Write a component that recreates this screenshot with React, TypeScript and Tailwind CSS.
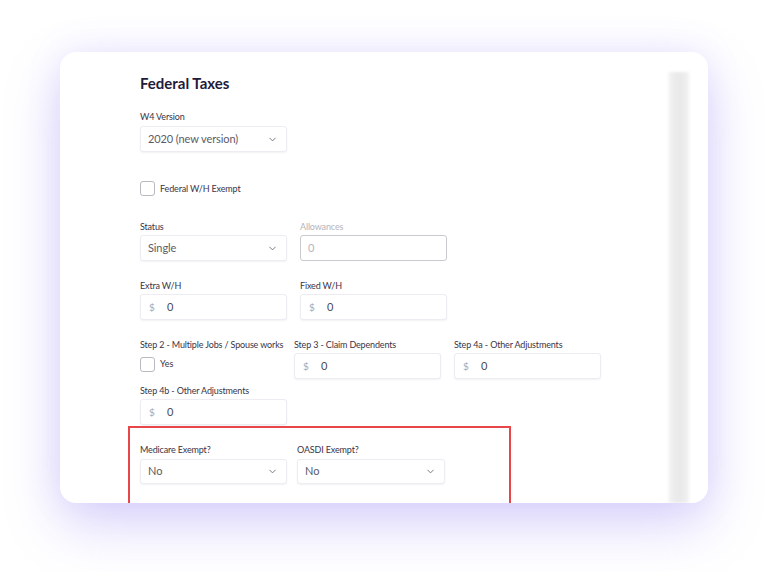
import { ChevronDown } from "lucide-react";

const font = { fontFamily: "Lato, 'Open Sans', sans-serif" };

function Label({ children, muted = false }: { children: React.ReactNode; muted?: boolean }) {
  return (
    <div
      className={`h-[12px] text-[9px] leading-[12px] tracking-[-0.15px] whitespace-nowrap ${muted ? "text-[#b4b4bc]" : "text-[#3a3447]"}`}
    >
      {children}
    </div>
  );
}

function Select({ value, width = "w-[147px]", height = "h-[26px]" }: { value: string; width?: string; height?: string }) {
  return (
    <div
      className={`${width} ${height} flex items-center justify-between rounded-[3px] border border-[#ececf2] bg-white pl-[7px] pr-[8px] shadow-[0_1px_2px_rgba(40,30,90,0.06)]`}
    >
      <span className="text-[11px] tracking-[-0.1px] text-[#5b5b66]">{value}</span>
      <ChevronDown className="h-[11px] w-[11px] text-[#6e6e78]" strokeWidth={2} />
    </div>
  );
}

function MoneyInput({ width = "w-[147px]" }: { width?: string }) {
  return (
    <div
      className={`${width} h-[26px] flex items-center rounded-[3px] border border-[#ececf2] bg-white pl-[8px] shadow-[0_1px_2px_rgba(40,30,90,0.06)]`}
    >
      <span className="w-[18px] text-[10px] text-[#a8a8b0]">$</span>
      <span className="text-[11px] text-[#4a4a55]">0</span>
    </div>
  );
}

function Checkbox() {
  return <div className="h-[15px] w-[15px] rounded-[3px] border border-[#b9b9c2] bg-white" />;
}

export default function App() {
  return (
    <div
      className="relative h-[572px] w-[768px] overflow-hidden bg-white pl-[60px] pt-[52px]"
      style={font}
    >
      <div className="flex h-[451px] w-[648px] overflow-hidden rounded-[16px] bg-white shadow-[0_22px_55px_rgba(125,105,240,0.28),0_0_34px_rgba(150,130,245,0.14)]">
        <div className="flex-1 pl-[80px] pt-[22px]">
          <h1 className="h-[18px] text-[15px] font-bold leading-[18px] text-[#1f1b3b]">Federal Taxes</h1>

          <div className="mt-[19px]">
            <Label>W4 Version</Label>
            <div className="mt-[3px]">
              <Select value="2020 (new version)" />
            </div>
          </div>

          <div className="mt-[29px] flex items-center gap-[5px]">
            <Checkbox />
            <span className="text-[9px] tracking-[-0.15px] text-[#3a3447]">Federal W/H Exempt</span>
          </div>

          <div className="mt-[25px] flex gap-[13px]">
            <div>
              <Label>Status</Label>
              <div className="mt-[2px]">
                <Select value="Single" />
              </div>
            </div>
            <div>
              <Label muted>Allowances</Label>
              <div className="mt-[2px] flex h-[26px] w-[147px] items-center rounded-[3px] border border-[#c9c9cf] bg-white pl-[7px]">
                <span className="text-[11px] text-[#b4b4bc]">0</span>
              </div>
            </div>
          </div>

          <div className="mt-[19px] flex gap-[13px]">
            <div>
              <Label>Extra W/H</Label>
              <div className="mt-[2px]">
                <MoneyInput />
              </div>
            </div>
            <div>
              <Label>Fixed W/H</Label>
              <div className="mt-[2px]">
                <MoneyInput />
              </div>
            </div>
          </div>

          <div className="mt-[19px] flex">
            <div className="w-[154px]">
              <Label>Step 2 - Multiple Jobs / Spouse works</Label>
              <div className="mt-[6px] flex items-center gap-[5px]">
                <Checkbox />
                <span className="-mt-[2px] text-[9px] text-[#3a3447]">Yes</span>
              </div>
            </div>
            <div className="w-[160px]">
              <Label>Step 3 - Claim Dependents</Label>
              <div className="mt-[2px]">
                <MoneyInput />
              </div>
            </div>
            <div>
              <Label>Step 4a - Other Adjustments</Label>
              <div className="mt-[2px]">
                <MoneyInput />
              </div>
            </div>
          </div>

          <div className="mt-[6px]">
            <Label>Step 4b - Other Adjustments</Label>
            <div className="mt-[2px]">
              <MoneyInput />
            </div>
          </div>

          <div className="-ml-[12px] mt-px h-[90px] w-[383px] border-2 border-[#e8474a] pl-[10px] pt-[16px]">
            <div className="flex gap-[10px]">
              <div>
                <Label>Medicare Exempt?</Label>
                <div className="mt-[3px]">
                  <Select value="No" height="h-[25px]" />
                </div>
              </div>
              <div>
                <Label>OASDI Exempt?</Label>
                <div className="mt-[3px]">
                  <Select value="No" width="w-[148px]" height="h-[25px]" />
                </div>
              </div>
            </div>
          </div>
        </div>

        <div className="mr-[18px] mt-[20px] w-[22px] bg-[linear-gradient(90deg,#f6f6f6_0%,#ebebeb_30%,#e9e9e9_60%,#efefef_85%,#fbfbfb_100%)] blur-[1.5px]" />
      </div>
    </div>
  );
}
